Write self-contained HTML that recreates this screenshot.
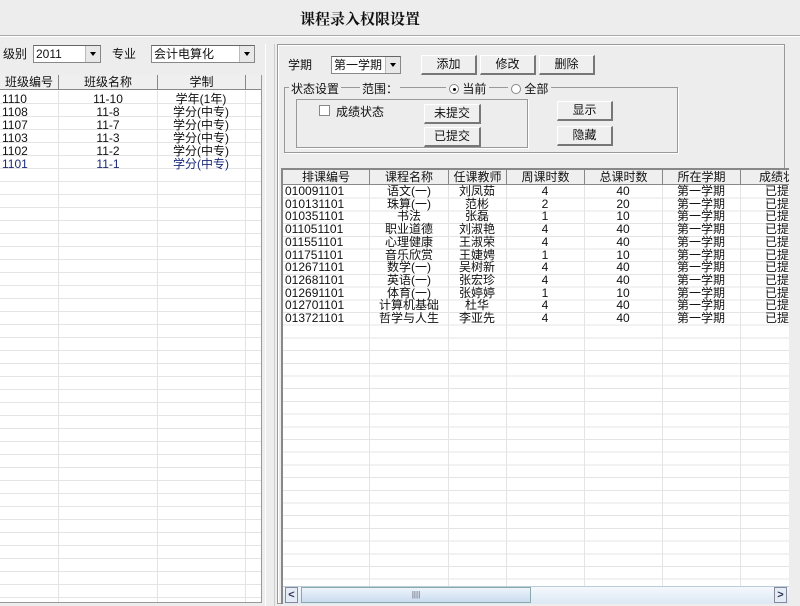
<!DOCTYPE html>
<html><head><meta charset="utf-8"><style>
*{margin:0;padding:0;box-sizing:border-box}
body{width:800px;height:606px;background:#ededed;font-family:"Liberation Sans","Noto Sans CJK SC","WenQuanYi Zen Hei",sans-serif;font-size:12px;color:#111;position:relative;overflow:hidden}
.a{position:absolute;white-space:nowrap}
.btn{position:absolute;background:#efefef;border:1px solid #fff;border-right:2px solid #777;border-bottom:2px solid #777;text-align:center;line-height:16px;font-size:12px}
.combo{position:absolute;background:#fff;border:1px solid #888;border-top-color:#666;font-size:12px;line-height:16px;padding-left:2px}
.combo i{position:absolute;right:0;top:0;width:15px;height:100%;background:#e8e8e8;border-left:1px solid #bbb}
.combo i:after{content:"";position:absolute;left:4px;top:6px;border:3.5px solid transparent;border-top:4px solid #000}
.grid{position:absolute;background:#fff;overflow:hidden}
.hdr{position:absolute;top:0;height:15px;background:#efefef;border-right:1px solid #888;border-bottom:1px solid #888;text-align:center;line-height:14px}
.cell{position:absolute;height:13px;line-height:13px}
</style></head><body>
<div class="a" style="left:300px;top:8px;font-size:15px;font-weight:bold;font-family:'Liberation Serif','Noto Serif CJK SC',serif">课程录入权限设置</div>
<div class="a" style="left:0;top:35px;width:800px;height:2px;border-top:1px solid #aaa;border-bottom:1px solid #fff"></div>

<div class="a" style="left:3px;top:45px">级别</div>
<div class="combo" style="left:33px;top:45px;width:68px;height:18px">2011<i></i></div>
<div class="a" style="left:112px;top:45px">专业</div>
<div class="combo" style="left:151px;top:45px;width:104px;height:18px">会计电算化<i></i></div>

<div class="grid" style="left:0;top:75px;width:262px;height:528px;border-right:1px solid #999;border-bottom:1px solid #999;background:#fff repeating-linear-gradient(to bottom,transparent 0,transparent 12px,#e4e4e4 12px,#e4e4e4 13px) 0 16px/100% 100% no-repeat">
 <div class="a" style="left:58px;top:0;width:1px;height:100%;background:#e4e4e4"></div>
 <div class="a" style="left:157px;top:0;width:1px;height:100%;background:#e4e4e4"></div>
 <div class="a" style="left:245px;top:0;width:1px;height:100%;background:#e4e4e4"></div>
 <div class="hdr" style="left:0;width:59px">班级编号</div>
 <div class="hdr" style="left:59px;width:99px">班级名称</div>
 <div class="hdr" style="left:158px;width:88px">学制</div>
 <div class="hdr" style="left:246px;width:16px;border-right:0"></div>
</div>
<div class="a" style="left:2px;top:93px;line-height:13px;color:#111">1110<br>1108<br>1107<br>1103<br>1102<br><span style="color:#1a2a7a">1101</span></div>
<div class="a" style="left:88px;top:93px;line-height:13px;text-align:center;width:40px">11-10<br>11-8<br>11-7<br>11-3<br>11-2<br><span style="color:#1a2a7a">11-1</span></div>
<div class="a" style="left:160px;top:93px;line-height:13px;text-align:center;width:82px">学年(1年)<br>学分(中专)<br>学分(中专)<br>学分(中专)<br>学分(中专)<br><span style="color:#1a2a7a">学分(中专)</span></div>

<div class="a" style="left:265px;top:44px;width:10px;height:562px;border-left:1px solid #fff;border-right:1px solid #ccc"></div>
<div class="a" style="left:277px;top:44px;width:508px;height:560px;border:1px solid #999;border-right-color:#999;box-shadow:inset 1px 1px #fff"></div>

<div class="a" style="left:288px;top:56px">学期</div>
<div class="combo" style="left:331px;top:56px;width:70px;height:18px">第一学期<i></i></div>
<div class="btn" style="left:421px;top:55px;width:56px;height:20px">添加</div>
<div class="btn" style="left:480px;top:55px;width:56px;height:20px">修改</div>
<div class="btn" style="left:539px;top:55px;width:56px;height:20px">删除</div>

<div class="a" style="left:284px;top:87px;width:394px;height:66px;border:1px solid #999;box-shadow:1px 1px #fff"></div>
<div class="a" style="left:289px;top:80px;background:#ededed;padding:0 2px">状态设置</div>
<div class="a" style="left:360px;top:80px;background:#ededed;padding:0 2px">范围：</div>
<div class="a" style="left:446px;top:80px;background:#ededed;padding:0 3px"><span style="display:inline-block;width:10px;height:10px;border-radius:50%;border:1px solid #888;background:#fff;vertical-align:-1px;position:relative"><b style="position:absolute;left:3px;top:3px;width:3px;height:3px;background:#000;border-radius:50%"></b></span> 当前</div>
<div class="a" style="left:508px;top:80px;background:#ededed;padding:0 3px"><span style="display:inline-block;width:10px;height:10px;border-radius:50%;border:1px solid #888;background:#fff;vertical-align:-1px"></span> 全部</div>
<div class="a" style="left:296px;top:99px;width:232px;height:49px;border:1px solid #999;box-shadow:1px 1px #fff"></div>
<div class="a" style="left:319px;top:105px;width:11px;height:11px;border:1px solid #888;background:#fff"></div>
<div class="a" style="left:336px;top:103px">成绩状态</div>
<div class="btn" style="left:424px;top:104px;width:57px;height:20px">未提交</div>
<div class="btn" style="left:424px;top:127px;width:57px;height:20px">已提交</div>
<div class="btn" style="left:557px;top:101px;width:56px;height:20px">显示</div>
<div class="btn" style="left:557px;top:126px;width:56px;height:20px">隐藏</div>

<div class="grid" style="left:281px;top:168px;width:508px;height:436px;border-left:2px solid #888;border-top:2px solid #888;background:#fff repeating-linear-gradient(to bottom,transparent 0,transparent 11.7px,#e4e4e4 11.7px,#e4e4e4 12.7px) 0 16px/100% 100% no-repeat">
 <div class="a" style="left:86px;top:0;width:1px;height:100%;background:#e4e4e4"></div>
 <div class="a" style="left:165px;top:0;width:1px;height:100%;background:#e4e4e4"></div>
 <div class="a" style="left:223px;top:0;width:1px;height:100%;background:#e4e4e4"></div>
 <div class="a" style="left:301px;top:0;width:1px;height:100%;background:#e4e4e4"></div>
 <div class="a" style="left:379px;top:0;width:1px;height:100%;background:#e4e4e4"></div>
 <div class="a" style="left:457px;top:0;width:1px;height:100%;background:#e4e4e4"></div>
 <div class="hdr" style="left:0;width:87px">排课编号</div>
 <div class="hdr" style="left:87px;width:79px">课程名称</div>
 <div class="hdr" style="left:166px;width:58px">任课教师</div>
 <div class="hdr" style="left:224px;width:78px">周课时数</div>
 <div class="hdr" style="left:302px;width:78px">总课时数</div>
 <div class="hdr" style="left:380px;width:78px">所在学期</div>
 <div class="hdr" style="left:458px;width:60px;text-align:left;padding-left:18px">成绩状</div>
 <div class="a" style="left:0;top:416px;width:506px;height:18px;background:linear-gradient(#f4f8fc,#dce8f4);border-top:1px solid #bcd"></div>
 <div class="a" style="left:2px;top:417px;width:13px;height:16px;background:#e4ecf6;border:1px solid #889;font-size:11px;line-height:14px;text-align:center;font-weight:bold;color:#335">&lt;</div>
 <div class="a" style="left:18px;top:417px;width:230px;height:16px;background:linear-gradient(#eef4fb,#c9dbef);border:1px solid #8aa;font-size:8px;text-align:center;line-height:14px;color:#556">||||</div>
 <div class="a" style="left:491px;top:417px;width:13px;height:16px;background:#e4ecf6;border:1px solid #889;font-size:11px;line-height:14px;text-align:center;font-weight:bold;color:#335">&gt;</div>
</div>
<div class="a" style="left:285px;top:185px;line-height:12.7px">010091101<br>010131101<br>010351101<br>011051101<br>011551101<br>011751101<br>012671101<br>012681101<br>012691101<br>012701101<br>013721101</div>
<div class="a" style="left:370px;top:185px;line-height:12.7px;width:78px;text-align:center">语文(一)<br>珠算(一)<br>书法<br>职业道德<br>心理健康<br>音乐欣赏<br>数学(一)<br>英语(一)<br>体育(一)<br>计算机基础<br>哲学与人生</div>
<div class="a" style="left:449px;top:185px;line-height:12.7px;width:56px;text-align:center">刘凤茹<br>范彬<br>张磊<br>刘淑艳<br>王淑荣<br>王婕娉<br>吴树新<br>张宏珍<br>张婷婷<br>杜华<br>李亚先</div>
<div class="a" style="left:507px;top:185px;line-height:12.7px;width:76px;text-align:center">4<br>2<br>1<br>4<br>4<br>1<br>4<br>4<br>1<br>4<br>4</div>
<div class="a" style="left:585px;top:185px;line-height:12.7px;width:76px;text-align:center">40<br>20<br>10<br>40<br>40<br>10<br>40<br>40<br>10<br>40<br>40</div>
<div class="a" style="left:663px;top:185px;line-height:12.7px;width:76px;text-align:center">第一学期<br>第一学期<br>第一学期<br>第一学期<br>第一学期<br>第一学期<br>第一学期<br>第一学期<br>第一学期<br>第一学期<br>第一学期</div>
<div class="a" style="left:765px;top:185px;line-height:12.7px;width:24px;overflow:hidden">已提交<br>已提交<br>已提交<br>已提交<br>已提交<br>已提交<br>已提交<br>已提交<br>已提交<br>已提交<br>已提交</div>
</body></html>
